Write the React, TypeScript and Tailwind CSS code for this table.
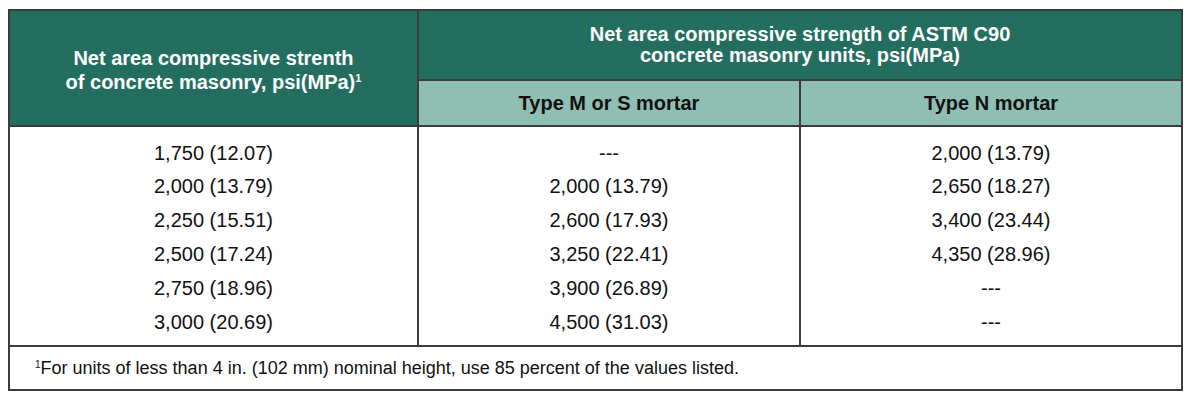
const rows: [string, string, string][] = [
  ['1,750 (12.07)', '---', '2,000 (13.79)'],
  ['2,000 (13.79)', '2,000 (13.79)', '2,650 (18.27)'],
  ['2,250 (15.51)', '2,600 (17.93)', '3,400 (23.44)'],
  ['2,500 (17.24)', '3,250 (22.41)', '4,350 (28.96)'],
  ['2,750 (18.96)', '3,900 (26.89)', '---'],
  ['3,000 (20.69)', '4,500 (31.03)', '---'],
];

export default function App() {
  return (
    <div className="w-[1188px] h-[400px] bg-white pt-[9px] pl-[8px]" style={{ fontFamily: '"Liberation Sans", Arial, sans-serif' }}>
      <table className="w-[1173px] border-collapse table-fixed border-2 border-[#3c3c3c] text-[#111]">
        <colgroup>
          <col className="w-[409px]" />
          <col className="w-[382px]" />
          <col className="w-[382px]" />
        </colgroup>
        <thead>
          <tr className="h-[70px]">
            <th
              rowSpan={2}
              className="bg-[#246e5f] text-white font-bold text-[20px] leading-[24px] border-2 border-[#3c3c3c] text-center align-middle pt-[3px]"
            >
              Net area compressive strenth
              <br />
              of concrete masonry, psi(MPa)<span className="relative -top-[7px] text-[11px] leading-none">1</span>
            </th>
            <th
              colSpan={2}
              className="bg-[#246e5f] text-white font-bold text-[20px] leading-[21px] border-2 border-[#3c3c3c] text-center align-middle"
            >
              Net area compressive strength of ASTM C90
              <br />
              concrete masonry units, psi(MPa)
            </th>
          </tr>
          <tr className="h-[46px]">
            <th className="bg-[#8fbfb2] font-bold text-[20px] border-2 border-[#3c3c3c] text-center align-middle">
              Type M or S mortar
            </th>
            <th className="bg-[#8fbfb2] font-bold text-[20px] border-2 border-[#3c3c3c] text-center align-middle">
              Type N mortar
            </th>
          </tr>
        </thead>
        <tbody className="text-[20px]">
          {rows.map((r, i) => {
            const first = i === 0;
            const last = i === rows.length - 1;
            const cls = first
              ? 'h-[43px] pt-[9px]'
              : last
                ? 'h-[41px] pb-[7px]'
                : 'h-[34px]';
            return (
              <tr key={i}>
                {r.map((v, j) => (
                  <td
                    key={j}
                    className={`${cls} text-center align-middle ${j > 0 ? 'border-l-2 border-[#3c3c3c]' : ''}`}
                  >
                    {v}
                  </td>
                ))}
              </tr>
            );
          })}
          <tr className="h-[44px] border-t-2 border-[#3c3c3c]">
            <td colSpan={3} className="text-[18px] pl-[25px] align-middle">
              <span className="relative -top-[6px] text-[10px] leading-none">1</span>For units of less than 4 in. (102 mm) nominal height, use 85 percent of the values listed.
            </td>
          </tr>
        </tbody>
      </table>
    </div>
  );
}
